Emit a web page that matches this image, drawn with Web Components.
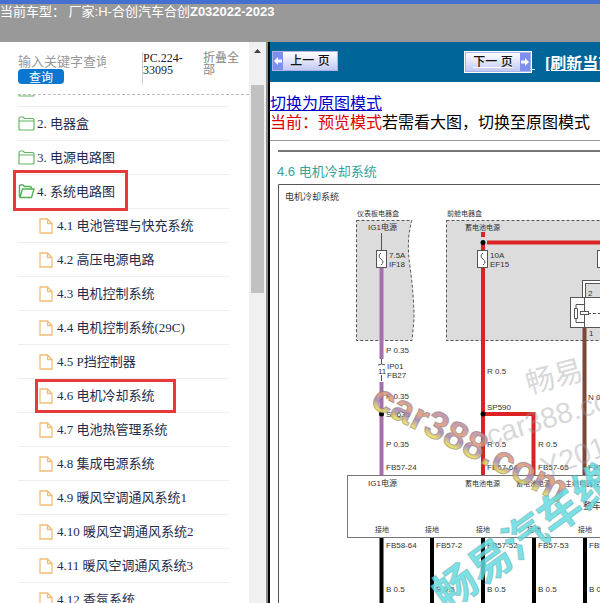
<!DOCTYPE html>
<html lang="zh-CN">
<head>
<meta charset="utf-8">
<title>电机冷却系统</title>
<style>
body {
  margin: 0;
  height: 100vh;
  overflow: hidden;
  background: #fff;
  font-family: "Liberation Serif", "Noto Sans CJK SC", serif;
}
</style>
</head>
<body>
<manual-app>
  <vehicle-bar slot="header">当前车型： 厂家:H-合创汽车合创<b>Z032022-2023</b></vehicle-bar>
  <side-panel slot="side">
    <search-box slot="search" placeholder="输入关键字查询">
      <span slot="code">PC.224-33095</span>
      <span slot="toggle">折叠全部</span>
    </search-box>
    <tree-item kind="folder"></tree-item>
    <tree-item kind="folder">2. 电器盒</tree-item>
    <tree-item kind="folder">3. 电源电路图</tree-item>
    <tree-item kind="open" marked>4. 系统电路图</tree-item>
    <tree-item kind="file">4.1 电池管理与快充系统</tree-item>
    <tree-item kind="file">4.2 高压电源电路</tree-item>
    <tree-item kind="file">4.3 电机控制系统</tree-item>
    <tree-item kind="file">4.4 电机控制系统(29C)</tree-item>
    <tree-item kind="file">4.5 P挡控制器</tree-item>
    <tree-item kind="file" marked>4.6 电机冷却系统</tree-item>
    <tree-item kind="file">4.7 电池热管理系统</tree-item>
    <tree-item kind="file">4.8 集成电源系统</tree-item>
    <tree-item kind="file">4.9 暖风空调通风系统1</tree-item>
    <tree-item kind="file">4.10 暖风空调通风系统2</tree-item>
    <tree-item kind="file">4.11 暖风空调通风系统3</tree-item>
    <tree-item kind="file">4.12 香氛系统</tree-item>
  </side-panel>
  <page-nav slot="main">[刷新当前页]</page-nav>
  <mode-note slot="main"><span slot="link">切换为原图模式</span><span slot="current">当前：预览模式</span>若需看大图，切换至原图模式</mode-note>
  <circuit-diagram slot="main"></circuit-diagram>
</manual-app>

<script>
// small helper so every element gets an open shadow root from its template
function define(name, html, setup) {
  const template = document.createElement("template");
  template.innerHTML = html;
  customElements.define(name, class extends HTMLElement {
    constructor() {
      super();
      this.attachShadow({ mode: "open" }).appendChild(template.content.cloneNode(true));
    }
    connectedCallback() {
      if (setup) setup(this, this.shadowRoot);
    }
  });
}

define("manual-app", `<style>
:host { display: flex; flex-direction: column; height: 100%; }
.frames { flex: 1; min-height: 0; display: grid; grid-template-columns: 270px 1fr; }
main { min-width: 0; overflow: hidden; }
aside {
  min-height: 0;
  display: grid;
  border-right: 2px solid #000;
  box-shadow: inset -2px 0 #8a8a8a;
  padding-right: 2px;
}
</style>
<slot name="header"></slot>
<div class="frames">
  <aside><slot name="side"></slot></aside>
  <main><slot name="main"></slot></main>
</div>`);

define("vehicle-bar", `<style>
:host {
  display: block;
  box-sizing: border-box;
  height: 42px;
  border-top: 4px solid #456fd0;
  background: #999;
  color: #fff;
  font: 13px/15px "Liberation Sans", "Noto Sans CJK SC", sans-serif;
  white-space: nowrap;
}
</style>
<slot></slot>`);

define("search-box", `<style>
:host { display: block; padding-left: 18px; }
form {
  display: grid;
  grid-template-columns: 124px 48px 1fr;
  height: 53px;
  box-sizing: border-box;
  padding-top: 10px;
  border-bottom: 1px dashed #bbb;
}
.field { display: flex; flex-direction: column; align-items: flex-start; }
input {
  width: 88px;
  height: 17px;
  padding: 0;
  border: 0;
  outline: 0;
  background: none;
  font: 13px/17px "Noto Sans CJK SC", sans-serif;
}
input::placeholder { color: #999; }
button {
  width: 46px;
  height: 15px;
  padding: 0;
  border: 0;
  border-radius: 4px;
  background: #0b76cf;
  color: #fff;
  font: 12px/15px "Noto Sans CJK SC", sans-serif;
}
.code, .toggle { font-size: 12px; line-height: 12px; }
.code { height: 32px; border-left: 1px solid #ccc; color: #222; }
.toggle { width: 36px; margin-left: 13px; color: #888; }
</style>
<form onsubmit="return false">
  <div class="field">
    <input type="text" aria-label="关键字">
    <button type="submit">查询</button>
  </div>
  <div class="code"><slot name="code"></slot></div>
  <div class="toggle"><slot name="toggle"></slot></div>
</form>`, (host, root) => {
  root.querySelector("input").placeholder = host.getAttribute("placeholder");
});

const icons = {
  folder: `<svg width="17" height="15" viewBox="0 0 17 15"><path d="M1 13V2.500Q1 1 2.500 1H5l1.500 1.500h8Q16 2.500 16 4v9q0 1-1 1H2q-1 0-1-1zM1 5h15" fill="none" stroke="#63b663" stroke-width="1.200"/></svg>`,
  open: `<svg width="17" height="15" viewBox="0 0 17 15"><path d="M1.500 13V2q0-1 1-1H5l1.500 1.500H12q1.500 0 1.500 2M2 13.500 4.500 5H16l-2.500 8.500H2z" fill="none" stroke="#53b353" stroke-width="1.400"/></svg>`,
  file: `<svg width="14" height="16" viewBox="0 0 14 16"><path d="M1 1h7.500L13 5.500V15H1zM8.500 1v4.500H13" fill="none" stroke="#f3bd76" stroke-width="1.300"/></svg>`
};

define("tree-item", `<style>
:host {
  display: block;
  box-sizing: border-box;
  height: 34px;
  border-bottom: 1px solid #eee;
  color: #1f2d4d;
  font-size: 13px;
  line-height: 33px;
  white-space: nowrap;
}
:host([kind="file"]) { padding-left: 21px; }
a {
  position: relative;
  display: inline-flex;
  height: 33px;
  color: inherit;
  text-decoration: none;
}
.icon { display: flex; align-items: center; width: 19px; }
:host([kind="file"]) .icon { width: 18px; }
/* red pen marks over the rows */
:host([marked]) a::after {
  content: "";
  position: absolute;
  inset: -5px -13px -3px -5px;
  border: 3px solid #e83a3a;
}
:host([marked][kind="file"]) a::after { inset: 0 -21px -1px -4px; }
</style>
<a href="#"><span class="icon"></span><slot></slot></a>`, (host, root) => {
  root.querySelector(".icon").innerHTML = icons[host.getAttribute("kind")];
});

// defined after tree-item: the rows need their height before the list can scroll
define("side-panel", `<style>
:host { display: grid; grid-template-columns: 1fr 17px; min-height: 0; }
.column { display: flex; flex-direction: column; min-height: 0; }
.tree { flex: 1; min-height: 0; overflow: hidden; padding: 0 20px 0 18px; }
.bar {
  display: flex;
  flex-direction: column;
  align-items: center;
  background: #f0f0f0;
}
.bar svg { width: 17px; height: 17px; margin-bottom: 26px; }
.thumb { width: 13px; height: 37%; background: #c1c1c1; }
</style>
<div class="column">
  <slot name="search"></slot>
  <div class="tree"><slot></slot></div>
</div>
<div class="bar">
  <svg viewBox="0 0 17 17"><path d="M5 11 8.500 7 12 11z" fill="#404040"/></svg>
  <div class="thumb"></div>
</div>`, (host, root) => {
  // list has been scrolled a little past the first folder
  root.querySelector(".tree").scrollTop = 22;
});

define("page-nav", `<style>
:host {
  display: grid;
  grid-template-columns: 193px 80px 1fr;
  align-items: center;
  height: 40px;
  padding-left: 2px;
  background: #069;
  color: #fff;
}
button {
  display: inline-flex;
  align-items: stretch;
  height: 20px;
  padding: 0;
  border: 1px solid #a9b4e8;
  background: linear-gradient(#fff, #c4c9f4);
  color: #111;
  font: 500 12px/18px "Liberation Sans", "Noto Sans CJK SC", sans-serif;
}
button span { width: 54px; text-align: center; }
button svg { width: 10px; height: 18px; background: #7d8ff0; }
.next { display: flex; align-items: flex-end; text-decoration: underline; }
.next button { outline: 1px solid #fff; }
a {
  overflow: hidden;
  color: #fff;
  font-weight: bold;
  font-size: 16px;
  white-space: nowrap;
}
</style>
<div>
  <button><svg viewBox="0 0 10 18"><path d="M1 9l4-4v2.500h4v3H5V13z" fill="#fff"/></svg><span>上一 页</span></button>
</div>
<div class="next">
  <button><span>下一 页</span><svg viewBox="0 0 10 18"><path d="M9 9 5 5v2.500H1v3h4V13z" fill="#fff"/></svg></button>&nbsp;
</div>
<a href="#"><slot></slot></a>`);

define("mode-note", `<style>
:host {
  display: block;
  padding: 12px 0 8px;
  border-bottom: 1px solid #999;
  font-size: 16px;
  line-height: 19px;
  white-space: nowrap;
}
a { color: #00c; }
.current { color: #d00; }
</style>
<div><a href="#"><slot name="link"></slot></a></div>
<div><span class="current"><slot name="current"></slot></span><slot></slot></div>`);

define("circuit-diagram", `<style>
:host { display: block; }
svg { display: block; }
text { font: 8px "Liberation Sans", "Noto Sans CJK SC", sans-serif; fill: #333; }
.cn { font-size: 7px; }
.name { font-size: 9px; }
.title { font-size: 13px; fill: #36a39c; }
.zone { fill: #dcdcdc; stroke: #555; stroke-dasharray: 3 2; }
.part { fill: #fff; stroke: #555; }
.thin { fill: none; stroke: #555; }
.red { fill: none; stroke: #dc2222; stroke-width: 4; }
.purple { fill: none; stroke: #a66fae; stroke-width: 4; }
.ground { stroke: #000; stroke-width: 4; }
.ghost text { font-size: 29px; fill: #999; fill-opacity: .4; }
.site { font-size: 39px; font-weight: bold; fill: url(#rainbow); fill-opacity: .85; stroke: #777; stroke-opacity: .5; }
.brand { font-size: 43px; font-weight: bold; fill: #63dce0; fill-opacity: .85; stroke: #6a9a9c; stroke-opacity: .4; }
</style>
<svg width="640" height="480" viewBox="270 142 640 480">
  <defs>
    <linearGradient id="rainbow" x1="0" y1="0" x2="0" y2="1">
      <stop offset=".3" stop-color="#c08a9c"/>
      <stop offset=".45" stop-color="#e39a70"/>
      <stop offset=".6" stop-color="#9d7fb5"/>
      <stop offset=".8" stop-color="#f0e050"/>
    </linearGradient>
  </defs>
  <path d="M278 152H900" stroke="#777" stroke-width="2"/>
  <text class="title" x="277" y="177">4.6 电机冷却系统</text>
  <path d="M278.500 620V185.500H900" class="thin"/>
  <text class="name" x="285" y="201">电机冷却系统</text>

  <!-- fuse boxes -->
  <text class="cn" x="357" y="217">仪表板电器盒</text>
  <path class="zone" d="M356.500 221.500H412Q406 240 410 268T414 320L412 341.500H356.500z"/>
  <text x="368" y="231">IG1电源</text>
  <text class="cn" x="447" y="217">前舱电器盒</text>
  <path class="zone" d="M446.500 221.500H900V341.500H446.500z"/>
  <text class="cn" x="465" y="231">蓄电池电源</text>

  <!-- ignition feed -->
  <path class="thin" d="M381.500 234v18M381.500 360v5M381.500 376v6"/>
  <path class="purple" d="M381.500 266v94M381.500 383v93"/>
  <rect class="part" x="376.500" y="251.500" width="10" height="17"/>
  <path class="thin" d="M381 254q-4 3 0 6t0 6"/>
  <text x="389" y="259">7.5A</text>
  <text x="389" y="268">IF18</text>
  <text x="386" y="354">P 0.35</text>
  <path d="M378 366q3.500-2 7 0" class="thin"/>
  <text x="378" y="375">11</text>
  <text x="387" y="370">IP01</text>
  <text x="387" y="379">FB27</text>
  <text x="386" y="400">P 0.35</text>
  <circle cx="381.500" cy="415" r="2.500"/>
  <text x="386" y="418">SP635</text>
  <text x="386" y="448">P 0.35</text>
  <text x="386" y="471">FB57-24</text>

  <!-- battery feed -->
  <path class="red" d="M483 233v5M483 245v231M487 243.500H900M483 415H533.500V476"/>
  <circle cx="483" cy="243.500" r="2.500"/>
  <circle cx="483" cy="415" r="2.500"/>
  <rect class="part" x="477.500" y="251.500" width="10" height="17"/>
  <path class="thin" d="M483 254q-4 3 0 6t0 6"/>
  <rect class="part" x="597.500" y="251.500" width="10" height="17"/>
  <text x="490" y="259">10A</text>
  <text x="490" y="268">EF15</text>
  <text x="487" y="375">R 0.5</text>
  <text x="487" y="411">SP590</text>
  <text x="487" y="448">R 0.5</text>
  <text x="538" y="448">R 0.5</text>
  <text x="487" y="471">FB57-64</text>
  <text x="538" y="471">FB57-65</text>

  <!-- relay -->
  <path d="M584 300V283H640" fill="none" stroke="#555" stroke-width="4"/>
  <path d="M584 300V283H640" fill="none" stroke="#fff" stroke-width="2"/>
  <rect class="part" x="570.500" y="298.500" width="60" height="30"/>
  <path class="thin" d="M584.500 298v31M584 305.500h-8v4M576 319.500v4h8M574.500 309.500h3v10h-3z"/>
  <path class="thin" d="M588 314.500h30" stroke-dasharray="3 2"/>
  <rect class="part" x="580.500" y="312.500" width="8" height="3"/>
  <text x="588" y="297">2</text>
  <text x="589" y="337">1</text>
  <path d="M584.500 329v147" stroke="#7c4638" stroke-width="4"/>
  <text x="588" y="401">N 0.5</text>
  <text x="588" y="471">FB57</text>

  <!-- vehicle controller -->
  <rect x="347.500" y="476.500" width="500" height="62" fill="none" stroke="#777"/>
  <text x="368" y="487">IG1电源</text>
  <text class="cn" x="465" y="487">蓄电池电源</text>
  <text class="cn" x="516" y="487">蓄电池电源</text>
  <text class="cn" x="565" y="487">主继电器控制</text>
  <text class="name" x="583" y="510">整车控制器</text>
  <text class="cn" x="375" y="533">接地</text>
  <text class="cn" x="425" y="533">接地</text>
  <text class="cn" x="476" y="533">接地</text>
  <text class="cn" x="527" y="533">接地</text>
  <text class="cn" x="578" y="533">接地</text>
  <path class="ground" d="M381.500 539v90M432 539v90M483 539v90M534 539v90M585 539v90"/>
  <text x="386" y="549">FB58-64</text>
  <text x="436" y="549">FB57-2</text>
  <text x="487" y="549">FB57-52</text>
  <text x="538" y="549">FB57-53</text>
  <text x="589" y="549">FB57</text>
  <text x="386" y="593">B 0.5</text>
  <text x="436" y="593">B 0.5</text>
  <text x="487" y="593">B 0.5</text>
  <text x="538" y="593">B 0.5</text>
  <text x="589" y="593">B 0.5</text>

  <!-- watermarks -->
  <g class="ghost">
    <text transform="translate(529 395) rotate(-15)">畅易</text>
    <text transform="translate(490 447) rotate(-17)">car388.com</text>
    <text transform="translate(545 479) rotate(-20)">Y2018</text>
  </g>
  <text class="site" transform="translate(369 407) rotate(27)">car388.com</text>
  <text class="brand" transform="translate(447 613) rotate(-36)">畅易汽车维修</text>
</svg>`);
</script>
</body>
</html>
